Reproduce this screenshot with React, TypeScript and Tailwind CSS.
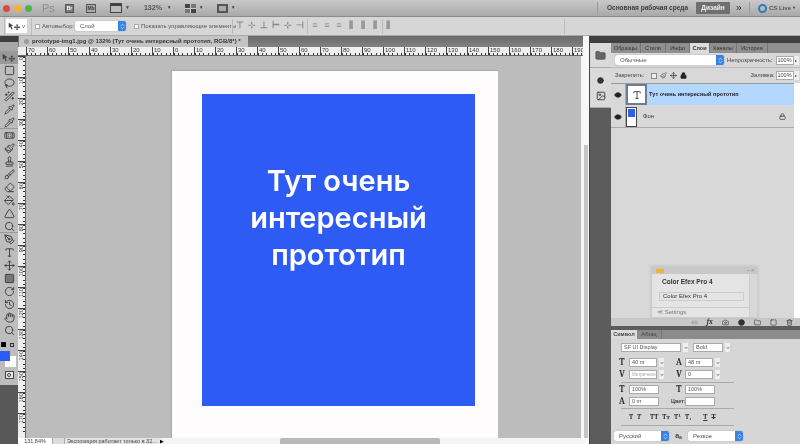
import {
  Bandage,
  Brush,
  ChevronDown,
  ChevronsRight,
  ChevronsUpDown,
  Eraser,
  Eye,
  Hand,
  History,
  Lasso,
  Lock,
  Move,
  PaintBucket,
  Paintbrush,
  PenTool,
  Pipette,
  RotateCw,
  Search,
  Stamp,
  Triangle,
  Type,
  Wand2,
  Link2,
  Trash2,
  Folder,
  Camera,
  Circle,
  Square,
  Image,
} from "lucide-react";

const ui = "font-['Liberation_Sans',sans-serif]";

function MoveTool({ className = "" }: { className?: string }) {
  return (
    <svg viewBox="0 0 20 14" className={className} fill="#444">
      <path d="M1 1l7 5-3 .6L7 11l-2 .6-1.4-4.2L1 9z" />
      <path d="M14 3l2 2.4h-1.3v1.8h1.8V6L19 8l-2.500 2V8.800h-1.800v1.800H16L14 13l-2-2.400h1.300V8.800h-1.800V10L9 8l2.500-2v1.200h1.800V5.400H12z" />
    </svg>
  );
}

function Select({ label, width }: { label: string; width: string }) {
  return (
    <div className={`${width} h-[10px] flex items-center bg-white rounded-[2px] shadow-[0_0_1px_#777] overflow-hidden`}>
      <span className="flex-1 pl-[5px] text-[6px] text-[#555]">{label}</span>
      <span className="w-[8px] h-full bg-[#3b82e6] flex items-center justify-center">
        <ChevronsUpDown className="w-[7px] h-[7px] text-white" />
      </span>
    </div>
  );
}

function TopBar() {
  return (
    <div className="h-[17px] flex items-center bg-gradient-to-b from-[#c9c9c9] to-[#a9a9a9] border-b border-[#8a8a8a] text-[#444]">
      <div className="flex gap-[4px] pl-[3px] w-[40px]">
        <span className="w-[7px] h-[7px] rounded-full bg-[#e0483e]" />
        <span className="w-[7px] h-[7px] rounded-full bg-[#f0b431]" />
        <span className="w-[7px] h-[7px] rounded-full bg-[#4cb648]" />
      </div>
      <span className="text-[11px] text-[#8f8f8f] w-[25px] pl-[2px]">Ps</span>
      <span className="w-[9px] h-[9px] bg-[#777] border border-[#555] text-[5px] leading-[7px] text-center text-white font-bold">Br</span>
      <span className="ml-[12px] w-[10px] h-[9px] border border-[#555] bg-[#aaa] text-[5px] leading-[7px] text-center font-bold">Mb</span>
      <span className="ml-[14px] w-[12px] h-[10px] border border-[#444] border-t-[3px] bg-[#bbb]" />
      <span className="ml-[3px] text-[5px]">▼</span>
      <span className="ml-[14px] text-[7px] font-bold text-[#555]">132%</span>
      <span className="ml-[5px] text-[5px]">▼</span>
      <span className="ml-[13px] w-[11px] h-[9px] grid grid-cols-2 gap-px bg-[#ccc]">
        <span className="bg-[#444]" />
        <span className="bg-[#777]" />
        <span className="bg-[#777]" />
        <span className="bg-[#444]" />
      </span>
      <span className="ml-[3px] text-[5px]">▼</span>
      <span className="ml-[13px] w-[11px] h-[9px] border-2 border-[#555] bg-[#aaa]" />
      <span className="ml-[3px] text-[5px]">▼</span>
      <span className="ml-auto w-px h-[13px] bg-[#999] mr-[9px]" />
      <span className="text-[6.500px] font-bold text-[#3c3c3c] mr-[8px] whitespace-nowrap">Основная рабочая среда</span>
      <span className="w-[34px] h-[12px] flex items-center justify-center bg-[#6f6f6f] text-[6.500px] font-bold text-[#eee] rounded-[1px]">Дизайн</span>
      <ChevronsRight className="w-[8px] h-[8px] ml-[5px] text-[#333]" strokeWidth={3} />
      <span className="w-px h-[13px] bg-[#999] ml-[6px] mr-[8px]" />
      <span className="w-[9px] h-[9px] rounded-full border-2 border-[#2b7fb8]" />
      <span className="text-[6px] font-bold text-[#555] ml-[2px] whitespace-nowrap">CS Live</span>
      <span className="text-[4px] ml-px mr-[4px]">▼</span>
    </div>
  );
}

function OptionsBar() {
  const glyphs = ["⊤", "⊹", "⊥", "⊢", "⊹", "⊣"];
  return (
    <div className="h-[19px] flex items-center bg-[#d6d6d6] border-b border-[#aaa] text-[#555]">
      <span className="w-[5px] h-full border-r border-[#bbb]" />
      <div className="w-[21px] h-[14px] ml-px bg-white flex items-center justify-center gap-px">
        <MoveTool className="w-[13px] h-[9px]" />
        <span className="text-[6px]">v</span>
      </div>
      <span className="w-px h-[17px] bg-[#bbb] ml-[4px] mr-[3px]" />
      <span className="w-[5px] h-[5px] bg-white border border-[#aaa] mr-[2px]" />
      <span className="text-[6px] w-[33px] whitespace-nowrap">Автовыбор:</span>
      <Select label="Слой" width="w-[51px]" />
      <span className="w-[5px] h-[5px] bg-white border border-[#aaa] ml-[8px] mr-[2px]" />
      <span className="text-[6px] w-[91px] whitespace-nowrap">Показать управляющие элементы</span>
      <span className="w-px h-[15px] bg-[#bbb] mr-[3px]" />
      <div className="flex gap-[4px] text-[9px] font-bold text-[#888]">
        {glyphs.map((g, i) => (
          <span key={i} className="w-[8px] text-center">{g}</span>
        ))}
      </div>
      <span className="w-px h-[15px] bg-[#bbb] mx-[3px]" />
      <div className="flex gap-[4px] text-[9px] font-bold text-[#888]">
        {["≡", "≡", "≡", "⫼", "⫼", "⫼"].map((g, i) => (
          <span key={i} className="w-[8px] text-center">{g}</span>
        ))}
      </div>
      <span className="w-px h-[15px] bg-[#bbb] mx-[3px]" />
      <span className="text-[9px] font-bold text-[#888]">⫼</span>
      <span className="ml-[174px] w-px h-[15px] bg-[#bbb]" />
    </div>
  );
}

const tools: { Icon: typeof Move | null; sep?: boolean; fill?: boolean }[] = [
  { Icon: null },
  { Icon: Square },
  { Icon: Lasso },
  { Icon: Wand2 },
  { Icon: Pipette },
  { Icon: Pipette, sep: true },
  { Icon: Bandage },
  { Icon: Paintbrush },
  { Icon: Stamp },
  { Icon: Brush },
  { Icon: Eraser },
  { Icon: PaintBucket },
  { Icon: Triangle },
  { Icon: Search, sep: true },
  { Icon: PenTool },
  { Icon: Type },
  { Icon: Move },
  { Icon: Square, fill: true },
  { Icon: RotateCw },
  { Icon: History },
  { Icon: Hand },
  { Icon: Search },
];

function Toolbar() {
  return (
    <div className="w-[18px] flex flex-col bg-[#585858]">
      <div className="h-[6px] bg-[#3f3f3f]" />
      <div className="h-[343px] bg-[#bdbdbd] flex flex-col">
        <div className="h-[9px] bg-[#a8a8a8]" />
        {tools.map(({ Icon, sep, fill }, i) => (
          <div
            key={i}
            className={`h-[13px] shrink-0 flex items-center justify-center ${i === 0 ? "bg-[#999]" : ""} ${sep ? "border-b border-[#999]" : ""}`}
          >
            {Icon ? (
              <Icon className={`w-[11px] h-[11px] text-[#3c3c3c] ${fill ? "fill-[#777]" : ""}`} strokeWidth={2} />
            ) : (
              <MoveTool className="w-[14px] h-[10px]" />
            )}
          </div>
        ))}
        <div className="h-[5px] flex items-center pl-[1px] gap-[4px] mt-[5px]">
          <span className="w-[5px] h-[5px] bg-black" />
          <span className="w-[4px] h-[4px] border border-[#333]" />
        </div>
        <div className="relative h-[16px] mt-[4px]">
          <span className="absolute left-[5px] top-[5px] w-[11px] h-[11px] bg-white" />
          <span className="absolute left-0 top-0 w-[10px] h-[10px] bg-[#2b5cf6]" />
        </div>
        <div className="flex justify-center mt-[4px]">
          <span className="w-[9px] h-[8px] border border-[#444] bg-[#e6e6e6] flex items-center justify-center">
            <span className="w-[4px] h-[4px] rounded-full border border-[#444]" />
          </span>
        </div>
      </div>
    </div>
  );
}

function HRuler() {
  const labels = [70, 60, 50, 40, 30, 20, 10, 0, 10, 20, 30, 40, 50, 60, 70, 80, 90, 100, 110, 120, 130, 140, 150, 160, 170, 180, 190];
  return (
    <div className="h-[9px] flex bg-[#efefef] border-b border-[#666] overflow-hidden pl-[8px]">
      {labels.map((n, i) => (
        <div key={i} className="relative w-[21px] shrink-0 border-l border-[#444] text-[6px] leading-[6px] text-[#333] pl-px">
          {n}
          <div className="absolute left-0 right-0 bottom-0 h-[2px] bg-[repeating-linear-gradient(90deg,#333_0,#333_1px,transparent_1px,transparent_4.200px)]" />
        </div>
      ))}
    </div>
  );
}

function VRuler() {
  const labels = [0, 10, 20, 30, 40, 50, 60, 70, 80, 90, 100, 110, 120, 130, 140, 150, 160, 170];
  return (
    <div className="w-[8px] shrink-0 flex flex-col bg-[#efefef] border-r border-[#666] overflow-hidden">
      {labels.map((n, i) => (
        <div key={i} className="relative h-[21px] shrink-0 border-t border-[#444] text-[5.500px] leading-[6px] text-[#333]">
          <span className="[writing-mode:vertical-rl] rotate-180 block pt-[6px]">{n}</span>
          <div className="absolute right-0 top-0 bottom-0 w-[2px] bg-[repeating-linear-gradient(180deg,#333_0,#333_1px,transparent_1px,transparent_4.200px)]" />
        </div>
      ))}
    </div>
  );
}

function DocumentArea() {
  return (
    <div className="w-[565px] flex flex-col">
      <div className="h-[11px] flex bg-gradient-to-b from-[#6a6a6a] to-[#828282]">
        <div className="w-[229px] ml-px bg-[#c4c4c4] flex items-center gap-[3px] pl-[5px] text-[6px] font-bold text-[#333] whitespace-nowrap overflow-hidden">
          <span className="w-[5px] h-[5px] rounded-full bg-[#999]" />
          prototype-img1.jpg @ 132% (Тут очень интересный прототип, RGB/8*) *
        </div>
      </div>
      <HRuler />
      <div className="flex-1 flex min-h-0">
        <VRuler />
        <div className="flex-1 flex bg-[#bcbcbc] pl-[146px] pt-[15px] overflow-hidden border-r-2 border-[#f6f6f6]">
          <div className="w-[326px] h-[400px] shrink-0 bg-[#fefcfd] pl-[30px] pt-[23px] shadow-[-1px_-1px_1px_#aaa]">
            <div className="w-[273px] h-[312px] bg-[#2f5bf5] pt-[68px] text-center font-['Inter',sans-serif] font-semibold text-white text-[29px] leading-[37px]">
              Тут очень
              <br />
              интересный
              <br />
              прототип
            </div>
          </div>
        </div>
      </div>
      <div className="h-[6px] flex bg-[#f4f4f4] text-[5.500px] leading-[6px] text-[#444] overflow-hidden">
        <span className="w-[34px] bg-white text-center">131,84%</span>
        <span className="w-[13px] border-x border-[#aaa] bg-[#ddd]" />
        <span className="w-[95px] bg-[#e4e4e4] pl-[2px] whitespace-nowrap overflow-hidden">Экспозиция работает только в 32...</span>
        <span className="w-[6px] text-[5px] text-black">▶</span>
        <span className="w-[114px]" />
        <span className="w-[160px] bg-[#b9b9b9] rounded-t-[2px]" />
      </div>
    </div>
  );
}

function VScroll() {
  return (
    <div className="w-[6px] bg-[#f8f8f8] pt-[109px] pb-[6px] flex justify-center">
      <div className="w-[4px] h-full bg-[#c6c6c6]" />
    </div>
  );
}

function Dock() {
  return (
    <div className="w-[21px] shrink-0">
      <div className="h-[65px] bg-[#dadada] border-b border-[#aaa] flex flex-col items-center">
        <div className="h-[25px] w-full flex items-center justify-center border-b border-[#aaa]">
          <Folder className="w-[11px] h-[11px] text-[#555] fill-[#666]" />
        </div>
        <Circle className="w-[7px] h-[7px] mt-[9px] text-[#333] fill-[#333]" />
        <Image className="w-[10px] h-[10px] mt-[7px] text-[#333]" />
      </div>
    </div>
  );
}

function NumField({ value }: { value: string }) {
  return (
    <div className="flex items-center">
      <span className="w-[18px] h-[9px] bg-white border border-[#aaa] text-[5.500px] leading-[7px] text-right pr-px text-[#444]">{value}</span>
      <span className="w-[5px] h-[9px] bg-[#eee] text-[4px] leading-[9px] text-center">▸</span>
    </div>
  );
}

function LayersPanel() {
  const tabs = ["Образцы", "Стили", "Инфо", "Слои", "Каналы", "История"];
  const widths = ["w-[30px]", "w-[25px]", "w-[24px]", "w-[20px]", "w-[27px]", "w-[31px]"];
  return (
    <div className="h-[283px] shrink-0 flex flex-col bg-[#d8d8d8] relative">
      <div className="h-[10px] flex bg-[#8f8f8f] text-[5.500px] text-[#333] shrink-0">
        {tabs.map((t, i) => (
          <span
            key={t}
            className={`${widths[i]} flex items-center justify-center border-r border-[#777] ${t === "Слои" ? "bg-[#dcdcdc] font-bold" : ""}`}
          >
            {t}
          </span>
        ))}
      </div>
      <div className="h-[15px] shrink-0 flex items-center pl-[4px] pr-[2px] gap-[3px] border-b border-[#bbb] text-[5.800px] text-[#444]">
        <Select label="Обычные" width="w-[109px]" />
        <span className="ml-auto whitespace-nowrap">Непрозрачность:</span>
        <NumField value="100%" />
      </div>
      <div className="h-[15px] shrink-0 flex items-center pl-[4px] pr-[2px] text-[5.800px] text-[#444]">
        <span className="w-[36px]">Закрепить:</span>
        <span className="w-[6px] h-[6px] border border-[#888] bg-[#eee] mr-[3px]" />
        <Paintbrush className="w-[7px] h-[7px] mr-[3px] text-[#555]" />
        <Move className="w-[7px] h-[7px] mr-[3px] text-[#222]" />
        <Lock className="w-[7px] h-[7px] text-[#222] fill-[#222]" />
        <span className="ml-auto mr-[1px]">Заливка:</span>
        <NumField value="100%" />
      </div>
      <div className="flex-1 bg-white flex flex-col min-h-0">
        <div className="w-[183px] flex-1 bg-[#d8d8d8] flex flex-col">
          <div className="h-[22px] flex bg-[#b3d7ff] border-t border-[#999]">
            <div className="w-[15px] bg-[#d8d8d8] flex items-center justify-center border-r border-[#aaa]">
              <Eye className="w-[8px] h-[8px] text-[#222] fill-[#222]" />
            </div>
            <div className="w-[21px] h-[21px] bg-white border-2 border-[#6b7f94] flex items-center justify-center">
              <Type className="w-[10px] h-[10px] text-[#333]" />
            </div>
            <span className="ml-[2px] self-center text-[5.600px] font-bold text-[#223] whitespace-nowrap">Тут очень интересный прототип</span>
          </div>
          <div className="h-[22px] flex border-b border-[#aaa] mt-px items-center">
            <div className="w-[15px] h-full flex items-center justify-center border-r border-[#aaa]">
              <Eye className="w-[8px] h-[8px] text-[#222] fill-[#222]" />
            </div>
            <div className="w-[11px] h-[20px] bg-white border border-[#444] pt-px pl-px">
              <div className="w-[7px] h-[8px] bg-[#2f5bf5]" />
            </div>
            <span className="ml-[6px] text-[5.800px] text-[#333]">Фон</span>
            <Lock className="w-[7px] h-[7px] ml-auto mr-[8px] text-[#222]" />
          </div>
        </div>
      </div>
      <div className="h-[8px] shrink-0 bg-[#c8c8c8] flex items-center justify-end gap-[9px] pr-[8px] text-[#333]">
        <Link2 className="w-[7px] h-[7px] text-[#888]" />
        <span className="text-[7px] font-serif italic font-bold">fx</span>
        <Camera className="w-[7px] h-[7px]" />
        <Circle className="w-[7px] h-[7px] fill-[#333]" />
        <Folder className="w-[7px] h-[7px]" />
        <Square className="w-[7px] h-[7px]" />
        <Trash2 className="w-[7px] h-[7px]" />
      </div>

      <div className="absolute left-[40px] top-[223px] w-[107px] h-[52px] bg-[#e4e4e4] border border-[#ccc] text-[#333] overflow-hidden shadow-[0_0_2px_#bbb]">
        <div className="h-[7px] bg-[#c8c8c8] flex items-center pl-[4px]">
          <span className="w-[8px] h-[4px] bg-[#e8b92e]" />
          <span className="ml-auto mr-[3px] text-[5px] text-[#888]">– ×</span>
        </div>
        <div className="flex h-full">
          <div className="flex-1">
            <p className="text-[6.500px] font-bold pl-[10px] pt-[3px] leading-[9px] whitespace-nowrap">Color Efex Pro 4</p>
            <div className="mt-[6px] ml-[7px] w-[85px] h-[9px] border border-[#ccc] text-[6px] leading-[7px] pl-[3px]">Color Efex Pro 4</div>
            <div className="mt-[6px] border-t border-[#ccc] text-[6px] text-[#777] pl-[5px] leading-[9px]">≪ Settings</div>
          </div>
          <div className="w-[8px] bg-[#d8d8d8] border-l border-[#ccc]" />
        </div>
      </div>
    </div>
  );
}

function CharIcon({ children }: { children: string }) {
  return <span className="w-[8px] h-[9px] text-center font-serif font-bold text-[9px] leading-[9px] text-[#333]">{children}</span>;
}

function Field({ value, width, muted = false, arrow = true }: { value: string; width: string; muted?: boolean; arrow?: boolean }) {
  return (
    <div className="flex items-center gap-[2px]">
      <span className={`${width} h-[9px] bg-white border border-[#aaa] leading-[7px] pl-[2px] whitespace-nowrap overflow-hidden ${muted ? "text-[#aaa] text-[4.500px]" : "text-[#555] text-[5.500px]"}`}>{value}</span>
      {arrow && (
        <span className="w-[5px] h-[9px] bg-[#eee] flex items-center justify-center">
          <ChevronDown className="w-[4px] h-[4px] text-[#333]" strokeWidth={4} />
        </span>
      )}
    </div>
  );
}

function CharacterPanel() {
  return (
    <div className="flex-1 min-h-0 flex flex-col bg-[#d6d6d6] text-[#444] overflow-hidden">
      <div className="h-[9px] shrink-0 flex bg-[#8c8c8c] text-[5.500px]">
        <span className="w-[26px] bg-[#dcdcdc] font-bold flex items-center justify-center">Символ</span>
        <span className="w-[25px] flex items-center justify-center border-r border-[#777]">Абзац</span>
      </div>
      <div className="pl-[7px] pt-[4px] flex flex-col">
        <div className="flex gap-[5px] h-[9px] items-center ml-[3px]">
          <Field value="SF UI Display" width="w-[60px]" />
          <Field value="Bold" width="w-[30px]" />
        </div>
        <div className="mt-[6px] grid grid-cols-[11px_46px_10px_auto] w-[116px] gap-y-[3px] items-center text-[5.500px]">
          <CharIcon>T</CharIcon>
          <Field value="40 пт" width="w-[28px]" />
          <CharIcon>A</CharIcon>
          <Field value="48 пт" width="w-[28px]" />
          <CharIcon>V</CharIcon>
          <Field value="Метрически" width="w-[28px]" muted />
          <CharIcon>V</CharIcon>
          <Field value="0" width="w-[28px]" />
        </div>
        <div className="w-[113px] ml-[3px] h-px bg-[#aaa] mt-[3px]" />
        <div className="mt-[2px] grid grid-cols-[11px_46px_10px_auto] w-[116px] gap-y-[3px] items-center text-[5.500px]">
          <CharIcon>T</CharIcon>
          <Field value="100%" width="w-[30px]" arrow={false} />
          <CharIcon>T</CharIcon>
          <Field value="100%" width="w-[30px]" arrow={false} />
          <CharIcon>A</CharIcon>
          <Field value="0 пт" width="w-[30px]" arrow={false} />
          <span className="-ml-[4px] text-[5.500px] font-bold">Цвет:</span>
          <Field value="" width="w-[30px]" arrow={false} />
        </div>
        <div className="w-[113px] ml-[3px] h-px bg-[#aaa] mt-[2px]" />
        <div className="flex items-center gap-[4px] h-[16px] pl-[11px] font-serif font-bold text-[7px] text-[#333]">
          <span>T</span>
          <span className="italic mr-[5px]">T</span>
          <span>TT</span>
          <span>Tт</span>
          <span>T¹</span>
          <span className="mr-[8px]">T₁</span>
          <span className="underline">T</span>
          <span className="line-through">T</span>
        </div>
        <div className="w-[113px] ml-[3px] h-px bg-[#aaa]" />
      </div>
      <div className="flex items-center pl-[3px] mt-[5px]">
        <Select label="Русский" width="w-[55px]" />
        <span className="w-[19px] text-center text-[7px] font-bold">a<sub className="text-[5px]">a</sub></span>
        <Select label="Резкое" width="w-[55px]" />
      </div>
    </div>
  );
}

function Panels() {
  return (
    <div className="w-[211px] shrink-0 flex flex-col bg-[#5c5c5c] border-l border-[#444]">
      <div className="h-[7px] shrink-0 bg-[#3f3f3f]" />
      <div className="flex flex-1 min-h-0">
        <Dock />
        <div className="w-[190px] flex flex-col">
          <LayersPanel />
          <div className="h-[4px] shrink-0" />
          <CharacterPanel />
        </div>
      </div>
    </div>
  );
}

export default function App() {
  return (
    <div className={`${ui} w-[800px] h-[444px] flex flex-col overflow-hidden bg-[#5c5c5c] blur-[0.5px]`}>
      <TopBar />
      <OptionsBar />
      <div className="flex-1 flex min-h-0">
        <Toolbar />
        <DocumentArea />
        <VScroll />
        <Panels />
      </div>
    </div>
  );
}
